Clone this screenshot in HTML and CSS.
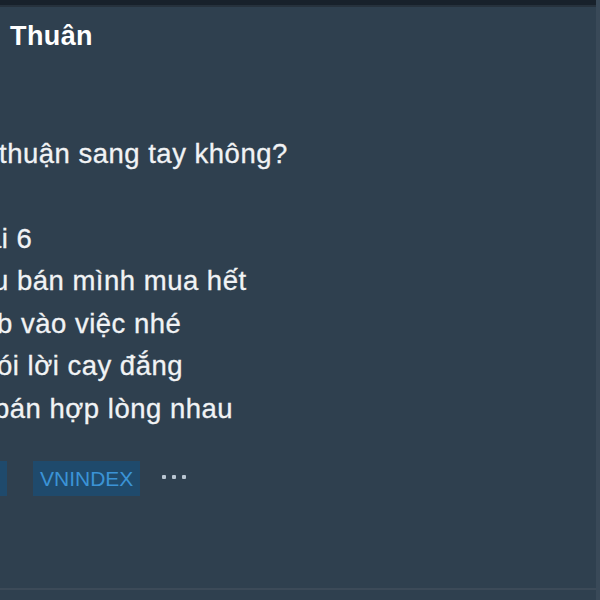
FILE: index.html
```html
<!DOCTYPE html>
<html lang="vi">
<head>
    <meta charset="UTF-8">
    <title>Bài viết</title>
    <link rel="stylesheet" href="styles.css">
</head>
<body>
    <div class="topbar"></div>
    <div class="post">
        <div class="author">Thuân</div>

        <div class="content">
            <p class="line off-1">thuận sang tay không?</p>
            <p class="line off-2 gap">ại 6</p>
            <p class="line off-3">u bán mình mua hết</p>
            <p class="line off-4">b vào việc nhé</p>
            <p class="line off-4">ói lời cay đắng</p>
            <p class="line off-5">bán hợp lòng nhau</p>
        </div>

        <div class="tags">
            <span class="tag partial"></span>
            <span class="tag">VNINDEX</span>
            <span class="more"><i></i><i></i><i></i></span>
        </div>
    </div>
    <div class="bottom-line"></div>
</body>
</html>
```

FILE: styles.css
```css
html, body {
    margin: 0;
    padding: 0;
    height: 100%;
}

body {
    font-family: 'Liberation Sans', Arial, sans-serif;
    background: #2f404f;
    color: #f1f3f5;
    overflow: hidden;
    position: relative;
    border-right: 4px solid #394958;
    box-sizing: border-box;
}

.topbar {
    height: 5px;
    background: #18212b;
    border-bottom: 2px solid #26313c;
}

.post {
    padding: 14px 0 0 10px;
}

.author {
    font-size: 27px;
    font-weight: bold;
    letter-spacing: 0.4px;
    color: #ffffff;
    line-height: 30px;
}

.content {
    margin-top: 82px;
    margin-left: -10px;
}

.line {
    margin: 0;
    font-size: 27.5px;
    letter-spacing: 0.5px;
    line-height: 42.5px;
    white-space: nowrap;
    -webkit-text-stroke: 0.3px #f1f3f5;
}

.line.gap {
    margin-top: 42px;
}

.off-1 { margin-left: -1px; }
.off-2 { margin-left: -14px; }
.off-3 { margin-left: -7px; }
.off-4 { margin-left: -3px; }
.off-5 { margin-left: -6px; }

.tags {
    display: flex;
    align-items: center;
    gap: 26px;
    margin-top: 31px;
    margin-left: -10px;
}

.tag {
    background: #1f4a6c;
    color: #3b93d6;
    font-size: 21px;
    padding: 6px 7px;
    line-height: 23px;
}

.tag.partial {
    width: 7px;
    height: 23px;
    padding: 6px 0;
}

.more {
    display: flex;
    gap: 6px;
    margin-left: -4px;
    margin-top: -4px;
}

.more i {
    width: 4px;
    height: 4px;
    border-radius: 1px;
    background: #b9c5d1;
}

.bottom-line {
    position: absolute;
    left: 0;
    right: 0;
    bottom: 10px;
    height: 2px;
    background: #3c4a58;
}
```
